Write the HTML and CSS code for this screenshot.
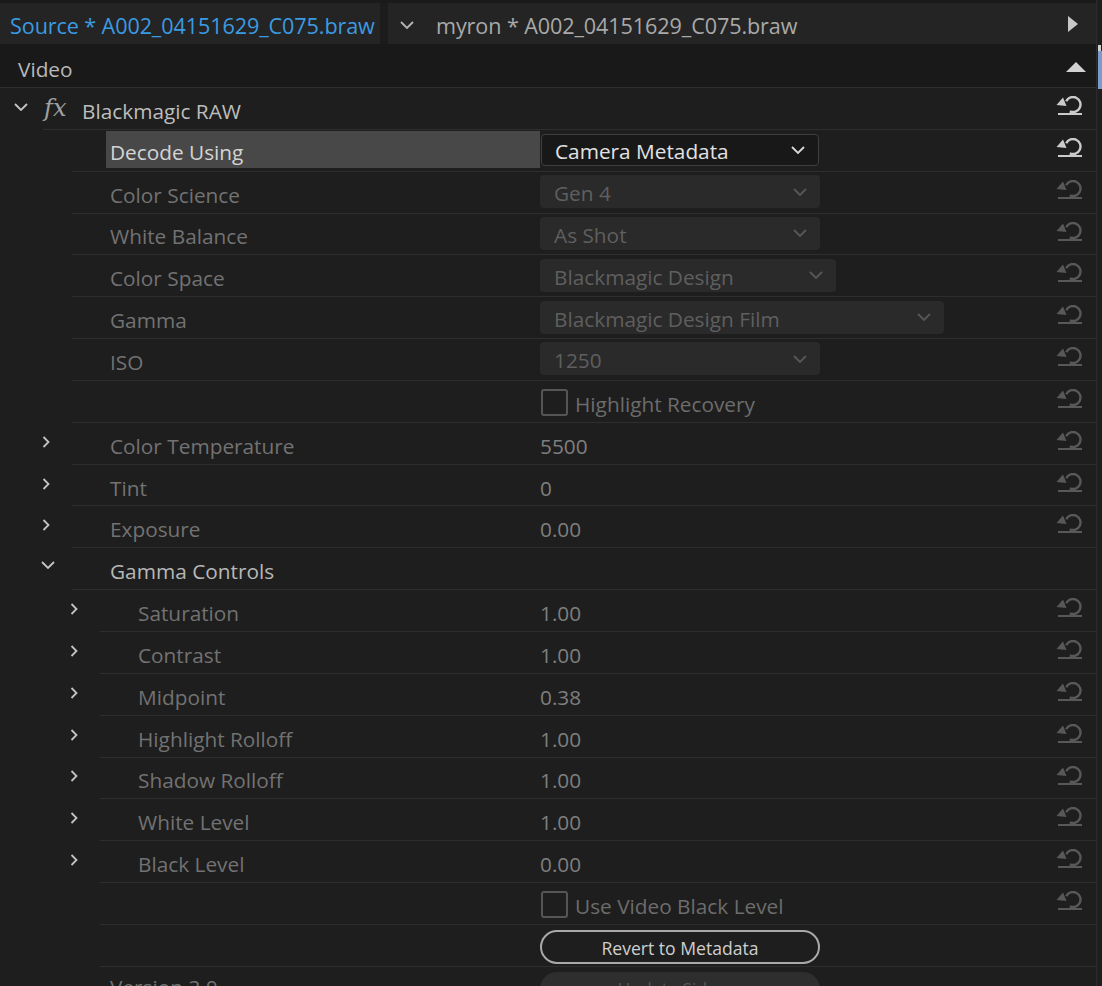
FILE: index.html
```html
<!DOCTYPE html>
<html>
<head>
<meta charset="utf-8">
<link rel="stylesheet" href="styles.css">
</head>
<body>
<div class="panel">
  <div class="main">
    <div class="tabbar">
      <div class="tab tab-active">Source * A002_04151629_C075.braw</div>
      <div class="tab-sep"></div>
      <div class="tab tab-second">
        <svg class="tab-chev" width="14" height="8" viewBox="0 0 14 8"><path d="M1 1 L7 7 L13 1" fill="none" stroke="currentColor" stroke-width="1.8"/></svg>
        <span class="tab-title">myron * A002_04151629_C075.braw</span>
        <svg class="tab-play" width="12" height="16" viewBox="0 0 12 16"><path d="M1 0 L11 8 L1 16 Z" fill="currentColor"/></svg>
      </div>
    </div>
    <div class="section-head">
      <span>Video</span>
      <svg class="up-tri" width="20" height="12" viewBox="0 0 20 12"><path d="M0 11 L10 1 L20 11 Z" fill="currentColor"/></svg>
    </div>

    <div class="row lvl0">
      <div class="gutter"><svg class="chev-down" width="14" height="8" viewBox="0 0 14 8"><path d="M1 1 L7 7 L13 1" fill="none" stroke="currentColor" stroke-width="1.8"/></svg></div>
      <div class="body">
        <div class="label fxlabel"><span class="fx">fx</span><span class="name bright">Blackmagic RAW</span></div>
        <div class="value"></div>
        <div class="reset on"><svg width="28" height="20" viewBox="0 0 28 20"><path d="M11.2 5.3 A7.5 7.5 0 1 1 14.8 15.3" fill="none" stroke="currentColor" stroke-width="2.4"/><path d="M1.5 9 L8 1.5 L11.5 10 Z" fill="currentColor"/><rect x="3" y="17" width="24" height="2" fill="currentColor"/></svg></div>
      </div>
    </div>

    <div class="row lvl1">
      <div class="gutter"></div>
      <div class="body">
        <div class="label"><div class="hl">Decode Using</div></div>
        <div class="value"><div class="dd dd-on w280"><span>Camera Metadata</span><svg width="14" height="8" viewBox="0 0 14 8"><path d="M1 1 L7 7 L13 1" fill="none" stroke="currentColor" stroke-width="1.8"/></svg></div></div>
        <div class="reset on"><svg width="28" height="20" viewBox="0 0 28 20"><path d="M11.2 5.3 A7.5 7.5 0 1 1 14.8 15.3" fill="none" stroke="currentColor" stroke-width="2.4"/><path d="M1.5 9 L8 1.5 L11.5 10 Z" fill="currentColor"/><rect x="3" y="17" width="24" height="2" fill="currentColor"/></svg></div>
      </div>
    </div>

    <div class="row lvl1">
      <div class="gutter"></div>
      <div class="body">
        <div class="label">Color Science</div>
        <div class="value"><div class="dd w280"><span>Gen 4</span><svg width="14" height="8" viewBox="0 0 14 8"><path d="M1 1 L7 7 L13 1" fill="none" stroke="currentColor" stroke-width="1.8"/></svg></div></div>
        <div class="reset"><svg width="28" height="20" viewBox="0 0 28 20"><path d="M11.2 5.3 A7.5 7.5 0 1 1 14.8 15.3" fill="none" stroke="currentColor" stroke-width="2.4"/><path d="M1.5 9 L8 1.5 L11.5 10 Z" fill="currentColor"/><rect x="3" y="17" width="24" height="2" fill="currentColor"/></svg></div>
      </div>
    </div>

    <div class="row lvl1">
      <div class="gutter"></div>
      <div class="body">
        <div class="label">White Balance</div>
        <div class="value"><div class="dd w280"><span>As Shot</span><svg width="14" height="8" viewBox="0 0 14 8"><path d="M1 1 L7 7 L13 1" fill="none" stroke="currentColor" stroke-width="1.8"/></svg></div></div>
        <div class="reset"><svg width="28" height="20" viewBox="0 0 28 20"><path d="M11.2 5.3 A7.5 7.5 0 1 1 14.8 15.3" fill="none" stroke="currentColor" stroke-width="2.4"/><path d="M1.5 9 L8 1.5 L11.5 10 Z" fill="currentColor"/><rect x="3" y="17" width="24" height="2" fill="currentColor"/></svg></div>
      </div>
    </div>

    <div class="row lvl1">
      <div class="gutter"></div>
      <div class="body">
        <div class="label">Color Space</div>
        <div class="value"><div class="dd w296"><span>Blackmagic Design</span><svg width="14" height="8" viewBox="0 0 14 8"><path d="M1 1 L7 7 L13 1" fill="none" stroke="currentColor" stroke-width="1.8"/></svg></div></div>
        <div class="reset"><svg width="28" height="20" viewBox="0 0 28 20"><path d="M11.2 5.3 A7.5 7.5 0 1 1 14.8 15.3" fill="none" stroke="currentColor" stroke-width="2.4"/><path d="M1.5 9 L8 1.5 L11.5 10 Z" fill="currentColor"/><rect x="3" y="17" width="24" height="2" fill="currentColor"/></svg></div>
      </div>
    </div>

    <div class="row lvl1">
      <div class="gutter"></div>
      <div class="body">
        <div class="label">Gamma</div>
        <div class="value"><div class="dd w404"><span>Blackmagic Design Film</span><svg width="14" height="8" viewBox="0 0 14 8"><path d="M1 1 L7 7 L13 1" fill="none" stroke="currentColor" stroke-width="1.8"/></svg></div></div>
        <div class="reset"><svg width="28" height="20" viewBox="0 0 28 20"><path d="M11.2 5.3 A7.5 7.5 0 1 1 14.8 15.3" fill="none" stroke="currentColor" stroke-width="2.4"/><path d="M1.5 9 L8 1.5 L11.5 10 Z" fill="currentColor"/><rect x="3" y="17" width="24" height="2" fill="currentColor"/></svg></div>
      </div>
    </div>

    <div class="row lvl1">
      <div class="gutter"></div>
      <div class="body">
        <div class="label">ISO</div>
        <div class="value"><div class="dd w280"><span>1250</span><svg width="14" height="8" viewBox="0 0 14 8"><path d="M1 1 L7 7 L13 1" fill="none" stroke="currentColor" stroke-width="1.8"/></svg></div></div>
        <div class="reset"><svg width="28" height="20" viewBox="0 0 28 20"><path d="M11.2 5.3 A7.5 7.5 0 1 1 14.8 15.3" fill="none" stroke="currentColor" stroke-width="2.4"/><path d="M1.5 9 L8 1.5 L11.5 10 Z" fill="currentColor"/><rect x="3" y="17" width="24" height="2" fill="currentColor"/></svg></div>
      </div>
    </div>

    <div class="row lvl1">
      <div class="gutter"></div>
      <div class="body">
        <div class="label"></div>
        <div class="value"><div class="check"><span class="box"></span><span>Highlight Recovery</span></div></div>
        <div class="reset"><svg width="28" height="20" viewBox="0 0 28 20"><path d="M11.2 5.3 A7.5 7.5 0 1 1 14.8 15.3" fill="none" stroke="currentColor" stroke-width="2.4"/><path d="M1.5 9 L8 1.5 L11.5 10 Z" fill="currentColor"/><rect x="3" y="17" width="24" height="2" fill="currentColor"/></svg></div>
      </div>
    </div>

    <div class="row lvl1">
      <div class="gutter"><svg class="chev-right" width="8" height="12" viewBox="0 0 8 12"><path d="M1.5 1 L6.5 6 L1.5 11" fill="none" stroke="currentColor" stroke-width="1.8"/></svg></div>
      <div class="body">
        <div class="label">Color Temperature</div>
        <div class="value num">5500</div>
        <div class="reset"><svg width="28" height="20" viewBox="0 0 28 20"><path d="M11.2 5.3 A7.5 7.5 0 1 1 14.8 15.3" fill="none" stroke="currentColor" stroke-width="2.4"/><path d="M1.5 9 L8 1.5 L11.5 10 Z" fill="currentColor"/><rect x="3" y="17" width="24" height="2" fill="currentColor"/></svg></div>
      </div>
    </div>

    <div class="row lvl1">
      <div class="gutter"><svg class="chev-right" width="8" height="12" viewBox="0 0 8 12"><path d="M1.5 1 L6.5 6 L1.5 11" fill="none" stroke="currentColor" stroke-width="1.8"/></svg></div>
      <div class="body">
        <div class="label">Tint</div>
        <div class="value num">0</div>
        <div class="reset"><svg width="28" height="20" viewBox="0 0 28 20"><path d="M11.2 5.3 A7.5 7.5 0 1 1 14.8 15.3" fill="none" stroke="currentColor" stroke-width="2.4"/><path d="M1.5 9 L8 1.5 L11.5 10 Z" fill="currentColor"/><rect x="3" y="17" width="24" height="2" fill="currentColor"/></svg></div>
      </div>
    </div>

    <div class="row lvl1">
      <div class="gutter"><svg class="chev-right" width="8" height="12" viewBox="0 0 8 12"><path d="M1.5 1 L6.5 6 L1.5 11" fill="none" stroke="currentColor" stroke-width="1.8"/></svg></div>
      <div class="body">
        <div class="label">Exposure</div>
        <div class="value num">0.00</div>
        <div class="reset"><svg width="28" height="20" viewBox="0 0 28 20"><path d="M11.2 5.3 A7.5 7.5 0 1 1 14.8 15.3" fill="none" stroke="currentColor" stroke-width="2.4"/><path d="M1.5 9 L8 1.5 L11.5 10 Z" fill="currentColor"/><rect x="3" y="17" width="24" height="2" fill="currentColor"/></svg></div>
      </div>
    </div>

    <div class="row lvl1">
      <div class="gutter"><svg class="chev-down" width="14" height="8" viewBox="0 0 14 8"><path d="M1 1 L7 7 L13 1" fill="none" stroke="currentColor" stroke-width="1.8"/></svg></div>
      <div class="body">
        <div class="label bright">Gamma Controls</div>
        <div class="value"></div>
        <div class="reset"></div>
      </div>
    </div>

    <div class="row lvl2">
      <div class="gutter"><svg class="chev-right" width="8" height="12" viewBox="0 0 8 12"><path d="M1.5 1 L6.5 6 L1.5 11" fill="none" stroke="currentColor" stroke-width="1.8"/></svg></div>
      <div class="body">
        <div class="label">Saturation</div>
        <div class="value num">1.00</div>
        <div class="reset"><svg width="28" height="20" viewBox="0 0 28 20"><path d="M11.2 5.3 A7.5 7.5 0 1 1 14.8 15.3" fill="none" stroke="currentColor" stroke-width="2.4"/><path d="M1.5 9 L8 1.5 L11.5 10 Z" fill="currentColor"/><rect x="3" y="17" width="24" height="2" fill="currentColor"/></svg></div>
      </div>
    </div>

    <div class="row lvl2">
      <div class="gutter"><svg class="chev-right" width="8" height="12" viewBox="0 0 8 12"><path d="M1.5 1 L6.5 6 L1.5 11" fill="none" stroke="currentColor" stroke-width="1.8"/></svg></div>
      <div class="body">
        <div class="label">Contrast</div>
        <div class="value num">1.00</div>
        <div class="reset"><svg width="28" height="20" viewBox="0 0 28 20"><path d="M11.2 5.3 A7.5 7.5 0 1 1 14.8 15.3" fill="none" stroke="currentColor" stroke-width="2.4"/><path d="M1.5 9 L8 1.5 L11.5 10 Z" fill="currentColor"/><rect x="3" y="17" width="24" height="2" fill="currentColor"/></svg></div>
      </div>
    </div>

    <div class="row lvl2">
      <div class="gutter"><svg class="chev-right" width="8" height="12" viewBox="0 0 8 12"><path d="M1.5 1 L6.5 6 L1.5 11" fill="none" stroke="currentColor" stroke-width="1.8"/></svg></div>
      <div class="body">
        <div class="label">Midpoint</div>
        <div class="value num">0.38</div>
        <div class="reset"><svg width="28" height="20" viewBox="0 0 28 20"><path d="M11.2 5.3 A7.5 7.5 0 1 1 14.8 15.3" fill="none" stroke="currentColor" stroke-width="2.4"/><path d="M1.5 9 L8 1.5 L11.5 10 Z" fill="currentColor"/><rect x="3" y="17" width="24" height="2" fill="currentColor"/></svg></div>
      </div>
    </div>

    <div class="row lvl2">
      <div class="gutter"><svg class="chev-right" width="8" height="12" viewBox="0 0 8 12"><path d="M1.5 1 L6.5 6 L1.5 11" fill="none" stroke="currentColor" stroke-width="1.8"/></svg></div>
      <div class="body">
        <div class="label">Highlight Rolloff</div>
        <div class="value num">1.00</div>
        <div class="reset"><svg width="28" height="20" viewBox="0 0 28 20"><path d="M11.2 5.3 A7.5 7.5 0 1 1 14.8 15.3" fill="none" stroke="currentColor" stroke-width="2.4"/><path d="M1.5 9 L8 1.5 L11.5 10 Z" fill="currentColor"/><rect x="3" y="17" width="24" height="2" fill="currentColor"/></svg></div>
      </div>
    </div>

    <div class="row lvl2">
      <div class="gutter"><svg class="chev-right" width="8" height="12" viewBox="0 0 8 12"><path d="M1.5 1 L6.5 6 L1.5 11" fill="none" stroke="currentColor" stroke-width="1.8"/></svg></div>
      <div class="body">
        <div class="label">Shadow Rolloff</div>
        <div class="value num">1.00</div>
        <div class="reset"><svg width="28" height="20" viewBox="0 0 28 20"><path d="M11.2 5.3 A7.5 7.5 0 1 1 14.8 15.3" fill="none" stroke="currentColor" stroke-width="2.4"/><path d="M1.5 9 L8 1.5 L11.5 10 Z" fill="currentColor"/><rect x="3" y="17" width="24" height="2" fill="currentColor"/></svg></div>
      </div>
    </div>

    <div class="row lvl2">
      <div class="gutter"><svg class="chev-right" width="8" height="12" viewBox="0 0 8 12"><path d="M1.5 1 L6.5 6 L1.5 11" fill="none" stroke="currentColor" stroke-width="1.8"/></svg></div>
      <div class="body">
        <div class="label">White Level</div>
        <div class="value num">1.00</div>
        <div class="reset"><svg width="28" height="20" viewBox="0 0 28 20"><path d="M11.2 5.3 A7.5 7.5 0 1 1 14.8 15.3" fill="none" stroke="currentColor" stroke-width="2.4"/><path d="M1.5 9 L8 1.5 L11.5 10 Z" fill="currentColor"/><rect x="3" y="17" width="24" height="2" fill="currentColor"/></svg></div>
      </div>
    </div>

    <div class="row lvl2">
      <div class="gutter"><svg class="chev-right" width="8" height="12" viewBox="0 0 8 12"><path d="M1.5 1 L6.5 6 L1.5 11" fill="none" stroke="currentColor" stroke-width="1.8"/></svg></div>
      <div class="body">
        <div class="label">Black Level</div>
        <div class="value num">0.00</div>
        <div class="reset"><svg width="28" height="20" viewBox="0 0 28 20"><path d="M11.2 5.3 A7.5 7.5 0 1 1 14.8 15.3" fill="none" stroke="currentColor" stroke-width="2.4"/><path d="M1.5 9 L8 1.5 L11.5 10 Z" fill="currentColor"/><rect x="3" y="17" width="24" height="2" fill="currentColor"/></svg></div>
      </div>
    </div>

    <div class="row lvl2">
      <div class="gutter"></div>
      <div class="body">
        <div class="label"></div>
        <div class="value"><div class="check"><span class="box"></span><span>Use Video Black Level</span></div></div>
        <div class="reset"><svg width="28" height="20" viewBox="0 0 28 20"><path d="M11.2 5.3 A7.5 7.5 0 1 1 14.8 15.3" fill="none" stroke="currentColor" stroke-width="2.4"/><path d="M1.5 9 L8 1.5 L11.5 10 Z" fill="currentColor"/><rect x="3" y="17" width="24" height="2" fill="currentColor"/></svg></div>
      </div>
    </div>

    <div class="row lvl2">
      <div class="gutter"></div>
      <div class="body">
        <div class="label"></div>
        <div class="value"><div class="btn">Revert to Metadata</div></div>
        <div class="reset"></div>
      </div>
    </div>

    <div class="row lvl1 last">
      <div class="gutter"></div>
      <div class="body">
        <div class="label">Version 3.0</div>
        <div class="value"><div class="btn btn-off">Update Sidecar</div></div>
        <div class="reset"></div>
      </div>
    </div>
  </div>
  <div class="scroll"><div class="tick"></div><div class="thumb"></div></div>
</div>
</body>
</html>
```

FILE: styles.css
```css
html, body {
  margin: 0;
  padding: 0;
  height: 986px;
  overflow: hidden;
  background: #1e1e1e;
}
body {
  font-family: "Open Sans", "Noto Sans", sans-serif;
  font-size: 20.8px;
  color: #727272;
}
.panel {
  display: flex;
  width: 1102px;
  height: 986px;
}
.main {
  width: 1096px;
  flex: none;
  border-right: 1px solid #2c2c2c;
}
.scroll {
  flex: 1;
  background: #1f1f1f;
  display: flex;
  flex-direction: column;
  padding-left: 1px;
}
.scroll .tick {
  height: 6px;
  margin-top: 45px;
  background: #cfcfcf;
  width: 3px;
}
.scroll .thumb {
  height: 38px;
  background: #7d99c8;
  width: 4px;
}

/* tab bar */
.tabbar {
  display: flex;
  height: 41px;
  border-top: 3px solid #1a1a1a;
  background: #242424;
  border-bottom: 1px solid #191919;
}
.tab {
  display: flex;
  align-items: center;
  height: 100%;
  box-sizing: border-box;
}
.tab-active {
  width: 380px;
  padding-left: 10px;
  padding-top: 4px;
  color: #3b9be2;
  font-size: 21.6px;
  letter-spacing: -0.1px;
}
.tab-sep {
  width: 8px;
  background: #1c1c1c;
}
.tab-second {
  flex: 1;
  padding-left: 12px;
  padding-right: 17px;
  color: #a9a9a9;
  font-size: 21.6px;
  letter-spacing: -0.1px;
}
.tab-chev {
  color: #b5b5b5;
  margin-right: 22px;
  margin-top: 2px;
}
.tab-title {
  flex: 1;
  padding-top: 4px;
}
.tab-play {
  color: #c8c8c8;
}

/* section header */
.section-head {
  height: 43px;
  box-sizing: border-box;
  background: #191919;
  border-bottom: 1px solid #2e2e2e;
  display: flex;
  align-items: center;
  justify-content: space-between;
  padding-left: 18px;
  padding-right: 10px;
  color: #b8b8b8;
}
.section-head span { padding-top: 5px; }
.up-tri {
  color: #d2d2d2;
  margin-top: 2px;
}

/* rows */
.row {
  display: flex;
  height: 41.85px;
}
.gutter {
  flex: none;
  display: flex;
  align-items: center;
  color: #c4c4c4;
}
.body {
  flex: 1;
  display: flex;
  align-items: center;
  border-bottom: 1px solid #2e2e2e;
  min-width: 0;
}
.lvl0 .gutter { width: 43px; }
.lvl0 .gutter .chev-down { margin-left: 14px; margin-top: -4px; }
.lvl1 .gutter { width: 72px; }
.lvl1 .gutter .chev-right { margin-left: 42px; margin-top: -4px; }
.lvl1 .gutter .chev-down { margin-left: 41px; margin-top: -8px; }
.lvl2 .gutter { width: 100px; }
.lvl2 .gutter .chev-right { margin-left: 70px; margin-top: -4px; }

.label {
  flex: none;
  box-sizing: border-box;
  height: 100%;
  display: flex;
  align-items: center;
  padding-top: 5px;
  white-space: nowrap;
}
.lvl0 .label { width: 497px; }
.lvl1 .label { width: 468px; padding-left: 38px; }
.lvl2 .label { width: 440px; padding-left: 38px; }
.label.bright { color: #b7b7b7; }
.fxlabel { padding-top: 0; }
.fx {
  font-family: "DejaVu Serif", serif;
  font-style: italic;
  font-size: 24px;
  color: #a0a0a0;
  margin-left: 1px;
  width: 38px;
  margin-top: 0;
}
.name.bright { color: #bdbdbd; padding-top: 6px; }

.lvl1 .label .hl {
  margin-left: -4px;
  flex: 1;
  align-self: stretch;
  margin-top: -4px;
  margin-bottom: 3px;
  background: #484848;
  color: #d4d4d4;
  padding-left: 4px;
  display: flex;
  align-items: center;
  padding-top: 5px;
}

.value {
  flex: 1;
  display: flex;
  align-items: center;
  min-width: 0;
}
.value.num {
  color: #7e7e7e;
  padding-top: 5px;
}
.dd {
  box-sizing: border-box;
  height: 33px;
  border-radius: 4px;
  background: #2a2a2a;
  display: flex;
  align-items: center;
  justify-content: space-between;
  padding-left: 14px;
  padding-right: 13px;
  color: #5f5f5f;
  margin-top: -1px;
}
.dd span { padding-top: 3px; white-space: nowrap; }
.dd svg { color: #575757; }
.dd-on {
  background: #181818;
  border: 1px solid #3f3f3f;
  color: #e2e2e2;
  height: 32px;
  padding-left: 13px;
  margin-left: 1px;
}
.dd-on svg { color: #d8d8d8; }
.w280 { width: 280px; }
.dd-on.w280 { width: 278px; }
.w296 { width: 296px; }
.w404 { width: 404px; }

.check {
  display: flex;
  align-items: center;
  gap: 7px;
  color: #6c6c6c;
  margin-top: 3px;
}
.check .box {
  box-sizing: border-box;
  width: 27px;
  height: 27px;
  border: 2px solid #555;
  border-radius: 3px;
  margin-left: 1px;
}
.check span:last-child { padding-top: 3px; white-space: nowrap; }

.btn {
  box-sizing: border-box;
  width: 280px;
  height: 34px;
  border-radius: 17px;
  border: 2px solid #a9a9a9;
  display: flex;
  align-items: center;
  justify-content: center;
  color: #cfcfcf;
  font-size: 17.6px;
  margin-top: 4px;
  padding-top: 1px;
}
.last .value { align-self: flex-start; }
.btn-off {
  border: none;
  background: #2e2e2e;
  color: #575757;
  margin-top: 5px;
}
.last .label { align-items: flex-start; padding-top: 6px; }

.reset {
  flex: none;
  width: 42px;
  padding-right: 13px;
  align-self: flex-start;
  padding-top: 8px;
  color: #585858;
  display: flex;
  justify-content: flex-end;
}
.reset.on { color: #cbcbcb; }
```
